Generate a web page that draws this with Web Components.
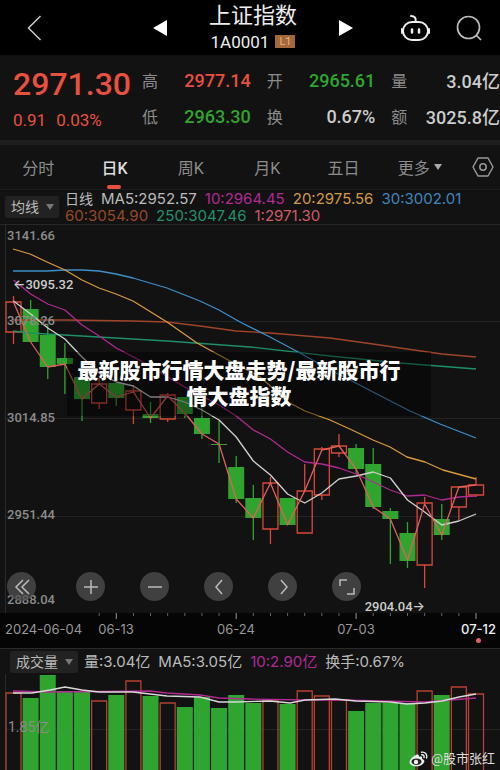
<!DOCTYPE html>
<html lang="zh-CN">
<head>
<meta charset="utf-8">
<meta name="viewport" content="width=device-width, initial-scale=1">
<title>上证指数 1A0001</title>
<style>
    body {
        margin: 0;
        background: #000;
        color: #ccc;
        font-family: Roboto, "Noto Sans CJK SC", sans-serif;
        overflow-x: hidden;
    }
</style>
</head>
<body>
<stock-app></stock-app>

<script>
const RED = "#e8503f";
const GREEN = "#2fa52f";

// header with title and navigation
class StockHeader extends HTMLElement {
    constructor() {
        super();
        this.attachShadow({ mode: "open" });
        this.shadowRoot.innerHTML = `
            <style>
            :host { display: block; background: #000; }
            header {
                display: grid;
                grid-template-columns: 1fr auto 1fr;
                align-items: center;
                height: 55px;
                padding: 0 18px 0 24px;
            }
            button {
                display: block;
                padding: 0;
                border: none;
                background: none;
                cursor: pointer;
            }
            svg { display: block; }
            .title {
                display: flex;
                align-items: center;
                gap: 42px;
            }
            .side { display: flex; gap: 26px; }
            .side.right { justify-content: flex-end; }
            h1 {
                margin: 0;
                font-size: 22px;
                line-height: 28px;
                font-weight: 400;
                color: #eee;
            }
            .name { text-align: center; }
            .code {
                display: flex;
                align-items: center;
                justify-content: center;
                gap: 6px;
                font-size: 17px;
                line-height: 24px;
                color: #eee;
            }
            .badge {
                background: #a5683a;
                color: #e0b080;
                font-size: 11px;
                line-height: 13px;
                padding: 0 4px;
            }
            </style>
            <header>
                <div class="side">
                    <button aria-label="返回">
                        <svg width="20" height="26" viewBox="0 0 20 26" fill="none" stroke="#ccc" stroke-width="1.5"><path d="M16.500 1 L4.500 13 L16.500 25"/></svg>
                    </button>
                </div>
                <div class="title">
                    <button aria-label="上一个"><svg width="14" height="16" viewBox="0 0 14 16"><path d="M14 0V16L0 8Z" fill="#fff"/></svg></button>
                    <div class="name">
                        <h1><slot name="name"></slot></h1>
                        <div class="code"><slot name="code"></slot><span class="badge">L1</span></div>
                    </div>
                    <button aria-label="下一个"><svg width="14" height="16" viewBox="0 0 14 16"><path d="M0 0V16L14 8Z" fill="#fff"/></svg></button>
                </div>
                <div class="side right">
                    <button aria-label="助手">
                        <svg width="29" height="28" viewBox="0 0 29 28" fill="none" stroke="#eee" stroke-width="2" stroke-linecap="round">
                            <rect x="2" y="8" width="25" height="18" rx="9"/>
                            <path d="M1 15V19M28 15V19M14.500 8C15.500 4 13.500 2 10 2"/>
                            <path d="M11 15.500V18.500M18 15.500V18.500" stroke-width="2.500"/>
                        </svg>
                    </button>
                    <button aria-label="搜索">
                        <svg width="26" height="26" viewBox="0 0 26 26" fill="none" stroke="#bbb" stroke-width="1.700"><circle cx="12.500" cy="12.500" r="11"/><path d="M20 20L25 25"/></svg>
                    </button>
                </div>
            </header>
        `;
    }
}

// price and daily figures
class StockQuote extends HTMLElement {
    constructor() {
        super();
        this.attachShadow({ mode: "open" });
        this.shadowRoot.innerHTML = `
            <style>
            :host {
                display: block;
                background: #121212;
                border-bottom: 5px solid #1f1f1f;
            }
            .quote {
                display: grid;
                grid-template-columns: 113px 1fr 1fr 1fr;
                column-gap: 16px;
                padding: 7px 0 6px 13px;
            }
            .col { display: grid; grid-template-rows: 36px 36px; margin: 0; }
            .col div {
                display: flex;
                align-items: center;
                justify-content: space-between;
                white-space: nowrap;
            }
            dt { font-size: 16px; color: #8c8c8c; }
            dd { margin: 0; font-size: 18px; font-weight: 500; color: #ccc; }
            .up { color: ${RED}; }
            .down { color: ${GREEN}; }
            .last { font-size: 32px; line-height: 44px; font-weight: 500; }
            .diff { font-size: 17px; line-height: 28px; display: flex; gap: 10px; }
            </style>
            <div class="quote">
                <div class="up">
                    <div class="last">2971.30</div>
                    <div class="diff"><span>0.91</span><span>0.03%</span></div>
                </div>
                <dl class="col">
                    <div><dt>高</dt><dd class="up">2977.14</dd></div>
                    <div><dt>低</dt><dd class="down">2963.30</dd></div>
                </dl>
                <dl class="col">
                    <div><dt>开</dt><dd class="down">2965.61</dd></div>
                    <div><dt>换</dt><dd>0.67%</dd></div>
                </dl>
                <dl class="col">
                    <div><dt>量</dt><dd>3.04亿</dd></div>
                    <div><dt>额</dt><dd>3025.8亿</dd></div>
                </dl>
            </div>
        `;
    }
}

// period tabs
class PeriodTabs extends HTMLElement {
    constructor() {
        super();
        this.attachShadow({ mode: "open" });
        this.shadowRoot.innerHTML = `
            <style>
            :host { display: block; border-bottom: 1px solid #1c1c1c; }
            nav { display: flex; height: 44px; }
            button {
                display: flex;
                align-items: center;
                justify-content: center;
                gap: 4px;
                flex: 1;
                padding: 0;
                border: none;
                background: none;
                color: #8c8c8c;
                font: inherit;
                font-size: 16px;
                white-space: nowrap;
                cursor: pointer;
                position: relative;
            }
            button.active { color: #ddd; font-weight: 500; }
            button.active::after {
                content: "";
                position: absolute;
                left: calc(50% - 7px);
                bottom: 0;
                width: 14px;
                height: 4px;
                border-radius: 2px;
                background: ${RED};
            }
            button.setting { flex: 0 0 42px; padding-left: 8px; }
            svg { display: block; }
            </style>
            <nav>
                <button>分时</button>
                <button class="active">日K</button>
                <button>周K</button>
                <button>月K</button>
                <button>五日</button>
                <button>更多<svg width="8" height="6" viewBox="0 0 8 6"><path d="M0 0H8L4 6Z" fill="#aaa"/></svg></button>
                <button class="setting" aria-label="设置">
                    <svg width="22" height="20" viewBox="0 0 22 20" fill="none" stroke="#999" stroke-width="1.500"><path d="M6 1H16L21 10L16 19H6L1 10Z" stroke-linejoin="round"/><circle cx="11" cy="10" r="3.200"/></svg>
                </button>
            </nav>
        `;
        this.shadowRoot.querySelectorAll("button:not(.setting)").forEach((tab, i, tabs) => {
            tab.onclick = () => {
                tabs.forEach((item) => item.classList.toggle("active", item === tab));
            };
        });
    }
}

// indicator select with its values
class IndicatorBar extends HTMLElement {
    constructor() {
        super();
        this.attachShadow({ mode: "open" });
        const options = this.getAttribute("options").split(",");
        this.shadowRoot.innerHTML = `
            <style>
            :host { display: flex; align-items: center; gap: 6px; }
            .select { position: relative; flex: none; }
            select {
                appearance: none;
                display: block;
                height: 22px;
                padding: 0 20px 0 6px;
                border: none;
                border-radius: 2px;
                background: #222;
                color: #bbb;
                font: inherit;
                font-size: 14px;
            }
            svg {
                position: absolute;
                right: 5px;
                top: 8px;
                pointer-events: none;
            }
            .values {
                display: flex;
                flex-wrap: wrap;
                column-gap: 8px;
                font-family: Inter, "Noto Sans CJK SC", sans-serif;
                font-size: 15px;
                line-height: 17px;
            }
            ::slotted(.period) { font-size: 14px; }
            </style>
            <div class="select">
                <select aria-label="指标">${options.map((o) => `<option>${o}</option>`).join("")}</select>
                <svg width="8" height="6" viewBox="0 0 8 6"><path d="M0 0H8L4 6Z" fill="#777"/></svg>
            </div>
            <div class="values"><slot></slot></div>
        `;
    }
}

// x of candle i, 28 candles on a 500 wide canvas
const cx = (i) => 13.5 + i * 17.13;
const line = (points, color) =>
    `<polyline points="${points}" fill="none" stroke="${color}" stroke-width="1.3" stroke-linejoin="round"/>`;

// [type, body top, body bottom, wick top, wick bottom]
const CANDLES = [
    ["r", 302, 332, 296, 344], ["g", 309, 342, 300, 342], ["g", 335, 367, 324, 379],
    ["g", 358, 364, 343, 394], ["g", 377, 399, 366, 421], ["r", 384, 403, 378, 409],
    ["g", 383, 398, 383, 406], ["r", 391, 410, 385, 424], ["g", 414, 418, 402, 423],
    ["r", 395, 419, 393, 422], ["g", 397, 414, 397, 418], ["g", 418, 434, 403, 439],
    ["g", 444, 445, 421, 463], ["g", 467, 499, 456, 503], ["g", 498, 518, 485, 540],
    ["r", 483, 529, 477, 544], ["g", 498, 525, 498, 525], ["r", 491, 533, 464, 533],
    ["r", 449, 495, 447, 500], ["r", 446, 453, 434, 457], ["g", 448, 469, 444, 474],
    ["g", 464, 507, 448, 509], ["g", 511, 519, 508, 564], ["g", 533, 561, 522, 568],
    ["r", 503, 565, 497, 588], ["g", 519, 535, 504, 540], ["r", 487, 507, 487, 520],
    ["r", 485, 495, 477, 497]
];
const CLOSES = [302, 342, 367, 364, 399, 384, 397, 392, 418, 396, 413, 434, 444, 499, 518, 483, 525, 491, 450, 446, 469, 507, 519, 560, 504, 535, 487, 485];
const MA5 = [301, 314, 328, 339, 357, 373, 382, 386, 397, 397, 402, 410, 420, 437, 461, 475, 494, 503, 493, 479, 476, 472, 478, 500, 512, 525, 521, 514];
const MA10 = [280, 294, 304, 310, 325, 336, 348, 357, 366, 377, 387, 396, 405, 416, 430, 439, 452, 462, 464, 468, 474, 482, 490, 496, 495, 500, 497, 496];
const MA20 = "13,249 30,254 47,262 65,270 82,280 99,288 116,294 133,301 167,322 197,343 230,361 260,377 275,390 288,402 305,411 330,420 352,430 373,440 390,447 407,457 425,462 443,470 476,479";
const MA30 = "13,271 47,271 65,270 82,270 99,271 116,274 133,278 150,283 167,288 200,301 219,310 240,322 270,337 300,353 330,370 352,381 373,392 410,411 440,424 476,438";
const MA60 = "13,320 65,320 133,321 167,322 200,326 236,331 270,333 330,338 373,344 407,349 442,354 476,357";
const MA250 = "13,331 30,333 167,341 250,347 330,356 400,363 476,369";
const byIndex = (ys) => ys.map((y, i) => `${cx(i)},${y}`).join(" ");

class CandleChart extends HTMLElement {
    constructor() {
        super();
        this.attachShadow({ mode: "open" });
        this.shadowRoot.innerHTML = `
            <style>
            :host {
                display: block;
                position: relative;
                border-top: 1px solid #282828;
                font-size: 13px;
                line-height: 16px;
            }
            .plot { display: block; width: 100%; height: 388px; }
            .plot * { vector-effect: non-scaling-stroke; }
            .label { position: absolute; left: 7px; font-weight: 500; color: #8c8c8c; }
            .mark { position: absolute; font-weight: 500; color: #ccc; }
            .mark span { font-family: Inter, sans-serif; }
            .tools {
                position: absolute;
                left: 7px;
                bottom: 12px;
                display: flex;
                gap: 35px;
            }
            .tools button {
                width: 29px;
                height: 29px;
                padding: 0;
                border: none;
                border-radius: 50%;
                background: rgba(80, 80, 80, 0.75);
                cursor: pointer;
            }
            .tools button:first-child { margin-right: 5px; }
            .tools svg { display: block; margin: auto; }
            </style>
            <svg class="plot" viewBox="0 225 500 388" preserveAspectRatio="none">${this.draw()}</svg>
            <span class="label" style="top: 3px">3141.66</span>
            <span class="label" style="top: 88px">3078.26</span>
            <span class="label" style="top: 185px">3014.85</span>
            <span class="label" style="top: 282px">2951.44</span>
            <span class="label" style="top: 367px">2888.04</span>
            <span class="mark" style="left: 13px; top: 51px"><span>←</span>3095.32</span>
            <span class="mark" style="right: 75px; top: 373px">2904.04<span>→</span></span>
            <div class="tools">
                ${this.tool("最左", "M12 4L5 11L12 18M18 4L11 11L18 18")}
                ${this.tool("放大", "M11 4V18M4 11H18")}
                ${this.tool("缩小", "M4 11H18")}
                ${this.tool("左移", "M14 4L8 11L14 18")}
                ${this.tool("右移", "M9 4L15 11L9 18")}
                ${this.tool("全屏", "M4 10V4H11M18 12V18H11")}
            </div>
            <slot></slot>
        `;
    }

    tool(label, path) {
        return `<button aria-label="${label}"><svg width="22" height="22" viewBox="0 0 22 22" fill="none" stroke="#bbb" stroke-width="1.5"><path d="${path}"/></svg></button>`;
    }

    draw() {
        let out = "";
        [321.5, 418.5, 516.5].forEach((y) => {
            out += `<path d="M5 ${y}H500" stroke="#242424"/>`;
        });
        out += `<path d="M5.5 225V613" stroke="#2a2a2a"/>`;
        CANDLES.forEach(([type, top, bottom, high, low], i) => {
            const x = cx(i);
            if (type === "g") {
                out += `<path d="M${x} ${high}V${low}" stroke="${GREEN}" stroke-width="1.3"/>`;
                out += `<rect x="${x - 8}" y="${top}" width="16" height="${bottom - top}" fill="${GREEN}"/>`;
            } else {
                out += `<path d="M${x} ${high}V${top}M${x} ${bottom}V${low}" stroke="#d8483a" stroke-width="1.3"/>`;
                out += `<rect x="${x - 7.5}" y="${top}" width="15" height="${bottom - top}" fill="none" stroke="#d8483a" stroke-width="1.3"/>`;
            }
        });
        out += line(MA60, "#a0442a");
        out += line(MA250, "#1f8f68");
        out += line(MA30, "#3f8fca");
        out += line(MA20, "#d99a3a");
        out += line(byIndex(MA10), "#b02a92");
        out += line(byIndex(MA5), "#d0d0d0");
        out += line(byIndex(CLOSES), "#e0605c");
        return out;
    }
}

// dates under the candles
class DateAxis extends HTMLElement {
    constructor() {
        super();
        this.attachShadow({ mode: "open" });
        let ticks = "";
        for (let i = 5; i < 28; i++) {
            const major = (i + 1) % 7 === 0;
            ticks += `<path d="M${cx(i)} 0V${major ? 6 : 3}" stroke="${major ? "#999" : "#666"}"/>`;
        }
        this.shadowRoot.innerHTML = `
            <style>
            :host { display: block; background: #050505; }
            svg { display: block; width: 100%; height: 7px; }
            .dates {
                display: grid;
                grid-template-columns: 11.2% 24% 24% 24% 1fr;
                height: 28px;
                font-family: Inter, sans-serif;
                font-size: 13px;
                line-height: 18px;
                text-align: center;
                white-space: nowrap;
                color: #999;
            }
            .first { padding-left: 5px; text-align: left; }
            .last {
                display: flex;
                flex-direction: column;
                align-items: center;
                justify-self: end;
                padding-right: 4px;
                font-weight: 500;
                color: #eee;
            }
            .last::after {
                content: "";
                width: 5px;
                height: 5px;
                border-radius: 50%;
                background: #e0605c;
            }
            </style>
            <svg viewBox="0 0 500 7" preserveAspectRatio="none">${ticks}</svg>
            <div class="dates">
                <span class="first">2024-06-04</span>
                <span>06-13</span>
                <span>06-24</span>
                <span>07-03</span>
                <span class="last">07-12</span>
            </div>
        `;
    }
}

const VOLUMES = [
    ["r", 693], ["g", 698], ["g", 675], ["g", 691], ["g", 692], ["r", 701], ["g", 695],
    ["r", 681], ["g", 696], ["r", 703], ["g", 707], ["g", 697], ["g", 708], ["g", 695],
    ["g", 703], ["r", 700], ["g", 704], ["r", 691], ["r", 696], ["r", 700], ["g", 711],
    ["g", 703], ["g", 703], ["g", 703], ["r", 691], ["g", 695], ["r", 687], ["r", 694]
];

class VolumeChart extends HTMLElement {
    constructor() {
        super();
        this.attachShadow({ mode: "open" });
        let bars = `<path d="M5 729.5H500" stroke="#242424"/><path d="M5.5 674V770" stroke="#2a2a2a"/>`;
        VOLUMES.forEach(([type, top], i) => {
            const x = cx(i);
            bars += type === "g"
                ? `<rect x="${x - 8}" y="${top}" width="16" height="100" fill="${GREEN}"/>`
                : `<rect x="${x - 7.5}" y="${top}" width="15" height="100" fill="none" stroke="#b8402f" stroke-width="1.3"/>`;
        });
        bars += line("13,691 50,692 150,691 167,693 200,695 219,698 250,699 305,700 340,700 425,702 476,698", "#b02a92");
        bars += line("13,693 32,693 50,690 65,687 82,690 99,692 133,692 167,696 200,697 219,702 236,702 270,701 290,703 305,700 335,699 356,701 390,702 407,704 425,703 442,701 459,697 476,694", "#d8d8d8");
        this.shadowRoot.innerHTML = `
            <style>
            :host { display: block; position: relative; }
            .plot { display: block; width: 100%; height: 96px; }
            .plot * { vector-effect: non-scaling-stroke; }
            .label {
                position: absolute;
                left: 8px;
                top: 44px;
                font-size: 14px;
                line-height: 18px;
                color: #8c8c8c;
            }
            .author {
                position: absolute;
                right: 5px;
                bottom: 2px;
                display: flex;
                align-items: center;
                gap: 3px;
                font-size: 13px;
                line-height: 19px;
                color: #ddd;
            }
            </style>
            <svg class="plot" viewBox="0 674 500 96" preserveAspectRatio="none">${bars}</svg>
            <span class="label">1.85亿</span>
            <div class="author">
                <svg width="19" height="16" viewBox="0 0 19 16">
                    <path d="M7 4C9 3 10.500 4 10 6C12 5 14 6 13 8C15 8.500 16 10 15 11.500C13 15 8 16 4.500 15C0.500 14 -0.500 11 1.500 8.500C3 6.500 5 4.800 7 4Z" fill="#eee"/>
                    <ellipse cx="7.500" cy="10.700" rx="5" ry="3.300" fill="#222"/>
                    <circle cx="7" cy="11" r="2.200" fill="#eee"/>
                    <path d="M12.500 1.200C16 0.500 18.500 3.500 17.500 7M12.700 3.800C14.500 3.500 15.500 5 15 6.500" fill="none" stroke="#eee" stroke-width="1.400" stroke-linecap="round"/>
                </svg>
                <slot></slot>
            </div>
        `;
    }
}

// caption band over the chart
class CaptionBand extends HTMLElement {
    constructor() {
        super();
        this.attachShadow({ mode: "open" });
        this.shadowRoot.innerHTML = `
            <style>
            :host {
                display: block;
                position: absolute;
                left: 67px;
                right: 69px;
                top: 127px;
                padding: 4px 28px 8px 8px;
                background: rgba(0, 0, 0, 0.4);
            }
            h2 {
                margin: 0;
                font-family: "Noto Sans CJK SC", sans-serif;
                font-size: 21px;
                line-height: 26px;
                font-weight: 900;
                text-align: center;
                color: #fff;
            }
            </style>
            <h2><slot></slot></h2>
        `;
    }
}

// whole page
class StockApp extends HTMLElement {
    constructor() {
        super();
        this.attachShadow({ mode: "open" });
        this.shadowRoot.innerHTML = `
            <style>
            :host { display: block; background: #121212; }
            .average { padding: 0 5px; height: 34px; }
            .volume { padding: 0 5px 0 10px; height: 25px; border-top: 1px solid #2a2a2a; }
            .white { color: #bbb; }
            .pink { color: #b02a92; }
            .orange { color: #cf9a48; }
            .blue { color: #3f86bd; }
            .brown { color: #96482a; }
            .green { color: #23906c; }
            .rose { color: #cf5a68; }
            </style>
            <stock-header>
                <span slot="name">上证指数</span>
                <span slot="code">1A0001</span>
            </stock-header>
            <stock-quote></stock-quote>
            <period-tabs></period-tabs>
            <indicator-bar class="average" options="均线">
                <span class="white period">日线</span>
                <span class="white">MA5:2952.57</span>
                <span class="pink">10:2964.45</span>
                <span class="orange">20:2975.56</span>
                <span class="blue">30:3002.01</span>
                <span class="brown">60:3054.90</span>
                <span class="green">250:3047.46</span>
                <span class="rose">1:2971.30</span>
            </indicator-bar>
            <candle-chart>
                <caption-band>最新股市行情大盘走势/最新股市行情大盘指数</caption-band>
            </candle-chart>
            <date-axis></date-axis>
            <indicator-bar class="volume" options="成交量">
                <span class="white">量:3.04亿</span>
                <span class="white">MA5:3.05亿</span>
                <span class="pink">10:2.90亿</span>
                <span class="white">换手:0.67%</span>
            </indicator-bar>
            <volume-chart>@股市张红</volume-chart>
        `;
    }
}

customElements.define("stock-header", StockHeader);
customElements.define("stock-quote", StockQuote);
customElements.define("period-tabs", PeriodTabs);
customElements.define("indicator-bar", IndicatorBar);
customElements.define("candle-chart", CandleChart);
customElements.define("date-axis", DateAxis);
customElements.define("volume-chart", VolumeChart);
customElements.define("caption-band", CaptionBand);
customElements.define("stock-app", StockApp);
</script>
</body>
</html>
